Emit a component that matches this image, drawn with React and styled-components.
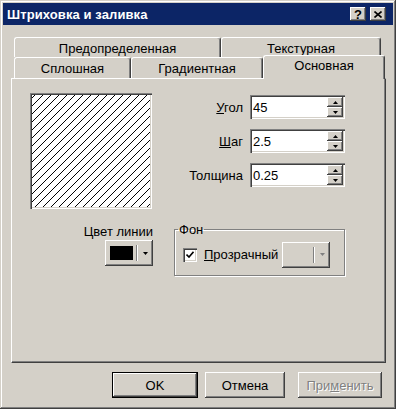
import React from "react";
import styled, { createGlobalStyle, css } from "styled-components";

const FACE = "#d4d0c8";
const SHADOW = "#808080";
const DARK = "#404040";

const GlobalStyle = createGlobalStyle`
  html, body {
    margin: 0;
    padding: 0;
    background: ${FACE};
  }
  body {
    font-family: "Liberation Sans", Arial, sans-serif;
    font-size: 13px;
    color: #000;
  }
`;

const raised = css`
  background: ${FACE};
  box-shadow: inset -1px -1px 0 ${DARK}, inset 1px 1px 0 #fff,
    inset -2px -2px 0 ${SHADOW}, inset 2px 2px 0 ${FACE};
`;

const sunken = css`
  box-shadow: inset 1px 1px 0 ${SHADOW}, inset 2px 2px 0 ${DARK},
    inset -1px -1px 0 #fff, inset -2px -2px 0 ${FACE};
`;

const Window = styled.div`
  width: 396px;
  height: 409px;
  box-sizing: border-box;
  padding: 3px;
  display: flex;
  flex-direction: column;
  background: ${FACE};
  box-shadow: inset -1px -1px 0 ${DARK}, inset 1px 1px 0 ${FACE},
    inset -2px -2px 0 ${SHADOW}, inset 2px 2px 0 #fff;
`;

const TitleBar = styled.div`
  height: 22px;
  display: flex;
  align-items: center;
  justify-content: space-between;
  padding: 0 7px 0 4px;
  background: #0c2566;
`;

const Title = styled.span`
  color: #fff;
  font-weight: bold;
  font-size: 13px;
  letter-spacing: 0.1px;
`;

const CaptionButtons = styled.div`
  display: flex;
  gap: 4px;
`;

const CaptionButton = styled.div`
  ${raised};
  width: 16px;
  height: 14px;
  display: flex;
  align-items: center;
  justify-content: center;
  font-weight: bold;
  font-size: 13px;
  line-height: 1;
`;

const Body = styled.div`
  flex: 1;
  display: flex;
  flex-direction: column;
  padding: 12px 7px 0 8px;
`;

const TabRow = styled.div`
  display: flex;
  height: ${(p) => p.$h}px;
  padding-left: 3px;
`;

const Tab = styled.div`
  width: ${(p) => p.$w}px;
  height: 100%;
  box-sizing: border-box;
  display: flex;
  align-items: center;
  justify-content: center;
  padding-top: 1px;
  background: ${FACE};
  border-top: 1px solid #fff;
  border-left: 1px solid #fff;
  border-right: 1px solid ${DARK};
  border-radius: 3px 3px 0 0;
  box-shadow: inset -1px 0 0 ${SHADOW};
  white-space: nowrap;

  ${(p) =>
    p.$active &&
    css`
      position: relative;
      z-index: 1;
      height: 24px;
      margin-top: -2px;
      padding-bottom: 5px;
    `}
`;

const Panel = styled.div`
  height: 285px;
  box-sizing: border-box;
  border-top: 1px solid #fff;
  border-left: 1px solid #fff;
  border-right: 1px solid ${DARK};
  border-bottom: 1px solid ${DARK};
  box-shadow: inset -1px -1px 0 ${SHADOW};
  padding: 14px 0 0 18px;
  display: flex;
  flex-direction: column;
`;

const TopRow = styled.div`
  display: flex;
  align-items: flex-start;
  gap: 31px;
`;

const Preview = styled.div`
  width: 122px;
  height: 116px;
  box-sizing: border-box;
  padding: 2px;
  background: #fff;
  ${sunken};

  svg {
    display: block;
  }
`;

const Fields = styled.div`
  display: grid;
  grid-template-columns: 60px 95px;
  column-gap: 7px;
  row-gap: 10px;
  align-items: center;
  margin-top: 2px;
`;

const FieldLabel = styled.label`
  text-align: right;
  white-space: nowrap;
`;

const U = styled.span`
  text-decoration: underline;
`;

const SpinInput = styled.div`
  height: 24px;
  box-sizing: border-box;
  padding: 2px 2px 2px 3px;
  display: flex;
  align-items: center;
  background: #fff;
  ${sunken};
`;

const Value = styled.span`
  flex: 1;
`;

const SpinColumn = styled.div`
  width: 16px;
  height: 20px;
  display: flex;
  flex-direction: column;
`;

const SpinButton = styled.div`
  ${raised};
  flex: 1;
  display: flex;
  align-items: center;
  justify-content: center;
`;

const BottomRow = styled.div`
  display: flex;
  align-items: flex-start;
  margin-top: 15px;
`;

const ColorField = styled.div`
  width: 123px;
  display: flex;
  flex-direction: column;
  align-items: flex-end;
  gap: 1px;
`;

const DropButton = styled.div`
  ${raised};
  width: 48px;
  height: 26px;
  box-sizing: border-box;
  display: flex;
  align-items: center;
  padding: 0 0 0 5px;
`;

const Swatch = styled.div`
  width: 23px;
  height: 14px;
  background: #000;
`;

const DropSep = styled.div`
  width: 1px;
  height: 16px;
  margin-left: ${(p) => p.$left}px;
  background: ${SHADOW};
  box-shadow: 1px 0 0 #fff;
`;

const DropArrow = styled.div`
  flex: 1;
  display: flex;
  justify-content: center;
  padding-left: 1px;
`;

const GroupBox = styled.fieldset`
  width: 171px;
  height: 53px;
  box-sizing: border-box;
  margin: -1px 0 0 21px;
  padding: 0 0 0 8px;
  border: 1px solid ${SHADOW};
  box-shadow: inset 1px 1px 0 #fff, 1px 1px 0 #fff;
  display: flex;
  align-items: center;
`;

const Legend = styled.legend`
  padding: 0 1px;
  margin-left: -5px;
  line-height: 13px;
`;

const GroupRow = styled.div`
  display: flex;
  align-items: center;
  margin-top: -2px;
`;

const CheckBox = styled.div`
  width: 14px;
  height: 14px;
  box-sizing: border-box;
  background: #fff;
  ${sunken};
  display: flex;
  align-items: center;
  justify-content: center;
`;

const CheckLabel = styled.span`
  margin-left: 7px;
  margin-right: 4px;
`;

const ButtonRow = styled.div`
  display: flex;
  justify-content: flex-end;
  gap: 7px;
  margin-top: 9px;
  padding-right: 4px;
`;

const DialogButton = styled.div`
  ${raised};
  width: ${(p) => p.$w}px;
  height: 26px;
  box-sizing: border-box;
  display: flex;
  align-items: center;
  justify-content: center;
  margin-left: ${(p) => p.$gap || 0}px;

  ${(p) =>
    p.$default &&
    css`
      border: 1px solid #000;
    `}
  ${(p) =>
    p.$disabled &&
    css`
      color: ${SHADOW};
      text-shadow: 1px 1px 0 #fff;
    `}
`;

// 1px stair-stepped "/" hatch, one pixel per column like the GDI brush
const HatchPreview = () => {
  const w = 118;
  const h = 112;
  const step = 8;
  let d = "";
  for (let i = 0; i < step; i++) {
    d += `M${i} ${step - 1 - i}h1v1h-1z`;
  }
  return (
    <svg width={w} height={h} viewBox={`0 0 ${w} ${h}`} shapeRendering="crispEdges">
      <defs>
        <pattern id="hatch" width={step} height={step} patternUnits="userSpaceOnUse" x="3" y="0">
          <path d={d} fill="#000" />
        </pattern>
      </defs>
      <rect width={w} height={h} fill="url(#hatch)" />
    </svg>
  );
};

const Arrow = ({ up, color = "#000" }) => (
  <svg width="5" height="3" viewBox="0 0 5 3">
    <path d={up ? "M2.5 0L5 3H0Z" : "M0 0H5L2.5 3Z"} fill={color} />
  </svg>
);

const SpinField = ({ label, value }) => (
  <>
    <FieldLabel>{label}</FieldLabel>
    <SpinInput>
      <Value>{value}</Value>
      <SpinColumn>
        <SpinButton>
          <Arrow up />
        </SpinButton>
        <SpinButton>
          <Arrow />
        </SpinButton>
      </SpinColumn>
    </SpinInput>
  </>
);

const App = () => {
  return (
    <>
      <GlobalStyle />
      <Window>
        <TitleBar>
          <Title>Штриховка и заливка</Title>
          <CaptionButtons>
            <CaptionButton>?</CaptionButton>
            <CaptionButton>
              <svg width="8" height="7" viewBox="0 0 8 7">
                <path d="M0.5 0.5L7.5 6.5M7.5 0.5L0.5 6.5" stroke="#000" strokeWidth="1.6" />
              </svg>
            </CaptionButton>
          </CaptionButtons>
        </TitleBar>

        <Body>
          <TabRow $h={20}>
            <Tab $w={207}>Предопределенная</Tab>
            <Tab $w={160}>Текстурная</Tab>
          </TabRow>
          <TabRow $h={21}>
            <Tab $w={117}>Сплошная</Tab>
            <Tab $w={132}>Градиентная</Tab>
            <Tab $w={122} $active>
              Основная
            </Tab>
          </TabRow>

          <Panel>
            <TopRow>
              <Preview>
                <HatchPreview />
              </Preview>
              <Fields>
                <SpinField
                  label={
                    <>
                      <U>У</U>гол
                    </>
                  }
                  value="45"
                />
                <SpinField
                  label={
                    <>
                      <U>Ш</U>аг
                    </>
                  }
                  value="2.5"
                />
                <SpinField label="Толщина" value="0.25" />
              </Fields>
            </TopRow>

            <BottomRow>
              <ColorField>
                <span>Цвет линии</span>
                <DropButton>
                  <Swatch />
                  <DropSep $left={3} />
                  <DropArrow>
                    <Arrow />
                  </DropArrow>
                </DropButton>
              </ColorField>

              <GroupBox>
                <Legend>Фон</Legend>
                <GroupRow>
                  <CheckBox>
                    <svg width="8" height="7" viewBox="0 0 8 7">
                      <path d="M0.5 3.5L3 6L7.5 0.8" stroke="#000" strokeWidth="1.6" fill="none" />
                    </svg>
                  </CheckBox>
                  <CheckLabel>
                    <U>П</U>розрачный
                  </CheckLabel>
                  <DropButton>
                    <DropSep $left={26} />
                    <DropArrow>
                      <Arrow color={SHADOW} />
                    </DropArrow>
                  </DropButton>
                </GroupRow>
              </GroupBox>
            </BottomRow>
          </Panel>

          <ButtonRow>
            <DialogButton $w={86} $default>
              OK
            </DialogButton>
            <DialogButton $w={80}>Отмена</DialogButton>
            <DialogButton $w={84} $gap={6} $disabled>
              При<U>м</U>енить
            </DialogButton>
          </ButtonRow>
        </Body>
      </Window>
    </>
  );
};

export default App;
